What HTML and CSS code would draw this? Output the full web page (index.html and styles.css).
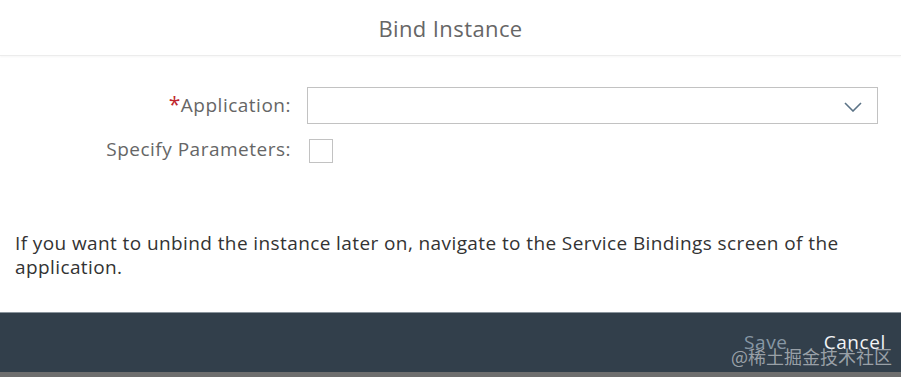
FILE: index.html
```html
<!DOCTYPE html>
<html lang="en">
<head>
  <meta charset="UTF-8" />
  <title>Bind Instance</title>
  <link rel="stylesheet" href="styles.css">
</head>
<body>
  <div class="dialog">
    <header class="dialog-header">Bind Instance</header>

    <div class="dialog-body">
      <div class="form-row">
        <label class="form-label" for="app"><span class="req">*</span>Application:</label>
        <div class="select" id="app">
          <svg class="chevron" width="18" height="10" viewBox="0 0 18 10">
            <polyline points="1,1 9,9 17,1" fill="none" stroke="#5b7386" stroke-width="1.6" />
          </svg>
        </div>
      </div>
      <div class="form-row">
        <label class="form-label" for="params">Specify Parameters:</label>
        <span class="checkbox" id="params"></span>
      </div>

      <p class="hint">If you want to unbind the instance later on, navigate to the Service Bindings screen of the application.</p>
    </div>

    <footer class="dialog-footer">
      <button class="btn btn-disabled">Save</button>
      <button class="btn">Cancel</button>
      <span class="watermark">@稀土掘金技术社区</span>
    </footer>
    <div class="bottom-strip"></div>
  </div>
</body>
</html>
```

FILE: styles.css
```css
body { margin: 0; font-family: "Open Sans", "Liberation Sans", sans-serif; background: #fff; }
.dialog { width: 901px; height: 377px; display: flex; flex-direction: column; }
.dialog-header {
  height: 55px; line-height: 57px; text-align: center; font-size: 22px; letter-spacing: 0.4px;
  color: #666; border-bottom: 1px solid #ececec; box-shadow: 0 1px 2px rgba(0,0,0,0.04);
}
.dialog-body { flex: 1; padding: 31px 23px 0 15px; }
.form-row { display: flex; align-items: center; margin-bottom: 13px; }
.form-label {
  width: 276px; text-align: right; padding-right: 16px; font-size: 19px; letter-spacing: 0.5px;
  color: #666; margin-top: -3px;
}
.req { color: #c0272d; font-size: 21px; }
.select {
  flex: 1; height: 35px; border: 1px solid #c2c2c2; position: relative; background: #fff;
}
.chevron { position: absolute; right: 15px; top: 14px; }
.checkbox {
  width: 22px; height: 22px; border: 1px solid #c2c2c2; margin-left: 2px; margin-top: 2px;
}
.hint {
  margin: 68px 0 0; font-size: 19px; letter-spacing: 0.4px; line-height: 24px; color: #333;
  width: 840px;
}
.dialog-footer {
  height: 59px; background: #323f4b; border-top: 1px solid #8a949c;
  display: flex; justify-content: flex-end; align-items: center; gap: 36px;
  padding-right: 15px; position: relative;
}
.btn {
  background: none; border: 0; padding: 0; font-family: inherit; font-size: 19px;
  letter-spacing: 0.6px; color: #f2f4f6; margin-top: -2px;
}
.btn-disabled { color: #8797a4; }
.watermark {
  position: absolute; right: 9px; bottom: 3px; font-size: 18px;
  font-family: "Noto Sans CJK SC", sans-serif; color: rgba(200,205,210,0.7);
}
.bottom-strip { height: 5px; background: #6e6e6e; }
```
